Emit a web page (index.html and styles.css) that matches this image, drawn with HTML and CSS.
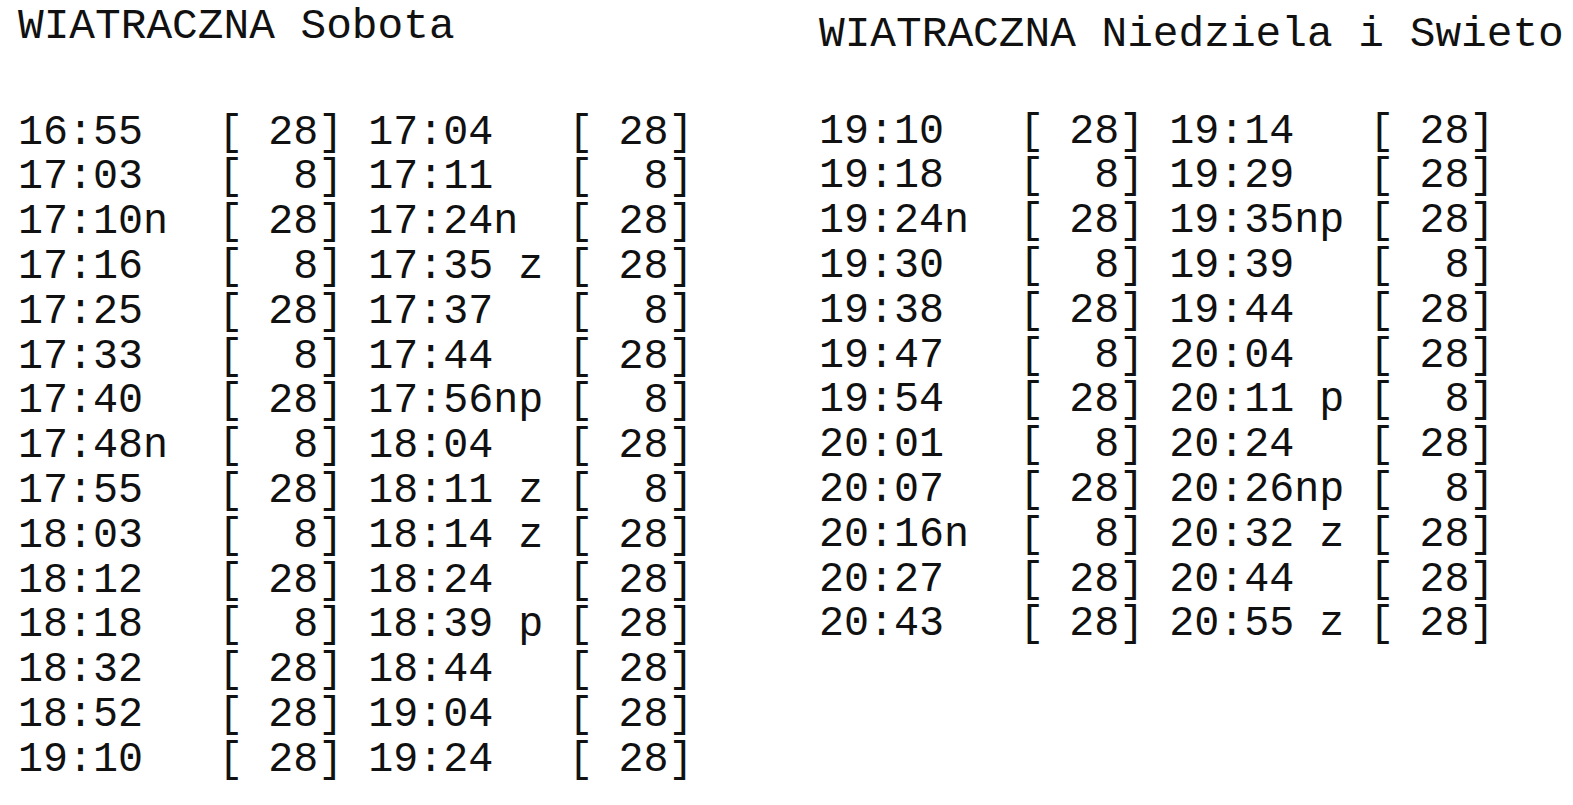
FILE: index.html
```html
<!DOCTYPE html>
<html lang="pl">
<head>
<meta charset="utf-8">
<title>WIATRACZNA</title>
<link rel="stylesheet" href="styles.css">
</head>
<body>
<main class="page">
  <section class="block block--sat">
    <h1 class="title">WIATRACZNA Sobota</h1>
    <div class="table">
      <span class="cell">16:55   [ 28]</span><span class="cell">17:04   [ 28]</span>
      <span class="cell">17:03   [  8]</span><span class="cell">17:11   [  8]</span>
      <span class="cell">17:10n  [ 28]</span><span class="cell">17:24n  [ 28]</span>
      <span class="cell">17:16   [  8]</span><span class="cell">17:35 z [ 28]</span>
      <span class="cell">17:25   [ 28]</span><span class="cell">17:37   [  8]</span>
      <span class="cell">17:33   [  8]</span><span class="cell">17:44   [ 28]</span>
      <span class="cell">17:40   [ 28]</span><span class="cell">17:56np [  8]</span>
      <span class="cell">17:48n  [  8]</span><span class="cell">18:04   [ 28]</span>
      <span class="cell">17:55   [ 28]</span><span class="cell">18:11 z [  8]</span>
      <span class="cell">18:03   [  8]</span><span class="cell">18:14 z [ 28]</span>
      <span class="cell">18:12   [ 28]</span><span class="cell">18:24   [ 28]</span>
      <span class="cell">18:18   [  8]</span><span class="cell">18:39 p [ 28]</span>
      <span class="cell">18:32   [ 28]</span><span class="cell">18:44   [ 28]</span>
      <span class="cell">18:52   [ 28]</span><span class="cell">19:04   [ 28]</span>
      <span class="cell">19:10   [ 28]</span><span class="cell">19:24   [ 28]</span>
    </div>
  </section>
  <section class="block block--sun">
    <h1 class="title">WIATRACZNA Niedziela i Swieto</h1>
    <div class="table">
      <span class="cell">19:10   [ 28]</span><span class="cell">19:14   [ 28]</span>
      <span class="cell">19:18   [  8]</span><span class="cell">19:29   [ 28]</span>
      <span class="cell">19:24n  [ 28]</span><span class="cell">19:35np [ 28]</span>
      <span class="cell">19:30   [  8]</span><span class="cell">19:39   [  8]</span>
      <span class="cell">19:38   [ 28]</span><span class="cell">19:44   [ 28]</span>
      <span class="cell">19:47   [  8]</span><span class="cell">20:04   [ 28]</span>
      <span class="cell">19:54   [ 28]</span><span class="cell">20:11 p [  8]</span>
      <span class="cell">20:01   [  8]</span><span class="cell">20:24   [ 28]</span>
      <span class="cell">20:07   [ 28]</span><span class="cell">20:26np [  8]</span>
      <span class="cell">20:16n  [  8]</span><span class="cell">20:32 z [ 28]</span>
      <span class="cell">20:27   [ 28]</span><span class="cell">20:44   [ 28]</span>
      <span class="cell">20:43   [ 28]</span><span class="cell">20:55 z [ 28]</span>
    </div>
  </section>
</main>
</body>
</html>
```

FILE: styles.css
```css
html, body {
  margin: 0;
  padding: 0;
  background: #ffffff;
}

body {
  font-family: "Courier New", "Nimbus Mono PS", "Nimbus Mono L", "FreeMono", "Liberation Mono", monospace;
  color: #111111;
}

.page {
  display: flex;
  padding-left: 18px;
}

.block--sat {
  flex: 0 0 800px;
  padding-top: 2.6px;
}

.block--sun {
  flex: 0 0 auto;
  padding-top: 10.6px;
  margin-left: 1px;
}

.title {
  margin: 0;
  font-size: 42.8px;
  font-weight: normal;
  line-height: 48px;
  white-space: pre;
}

.table {
  display: grid;
  grid-template-columns: repeat(2, 14ch);
  font-size: 41.7px;
  line-height: 44.8px;
}

.block--sat .table {
  margin-top: 60px;
}

.block--sun .table {
  margin-top: 51px;
}

.cell {
  white-space: pre;
}
```
